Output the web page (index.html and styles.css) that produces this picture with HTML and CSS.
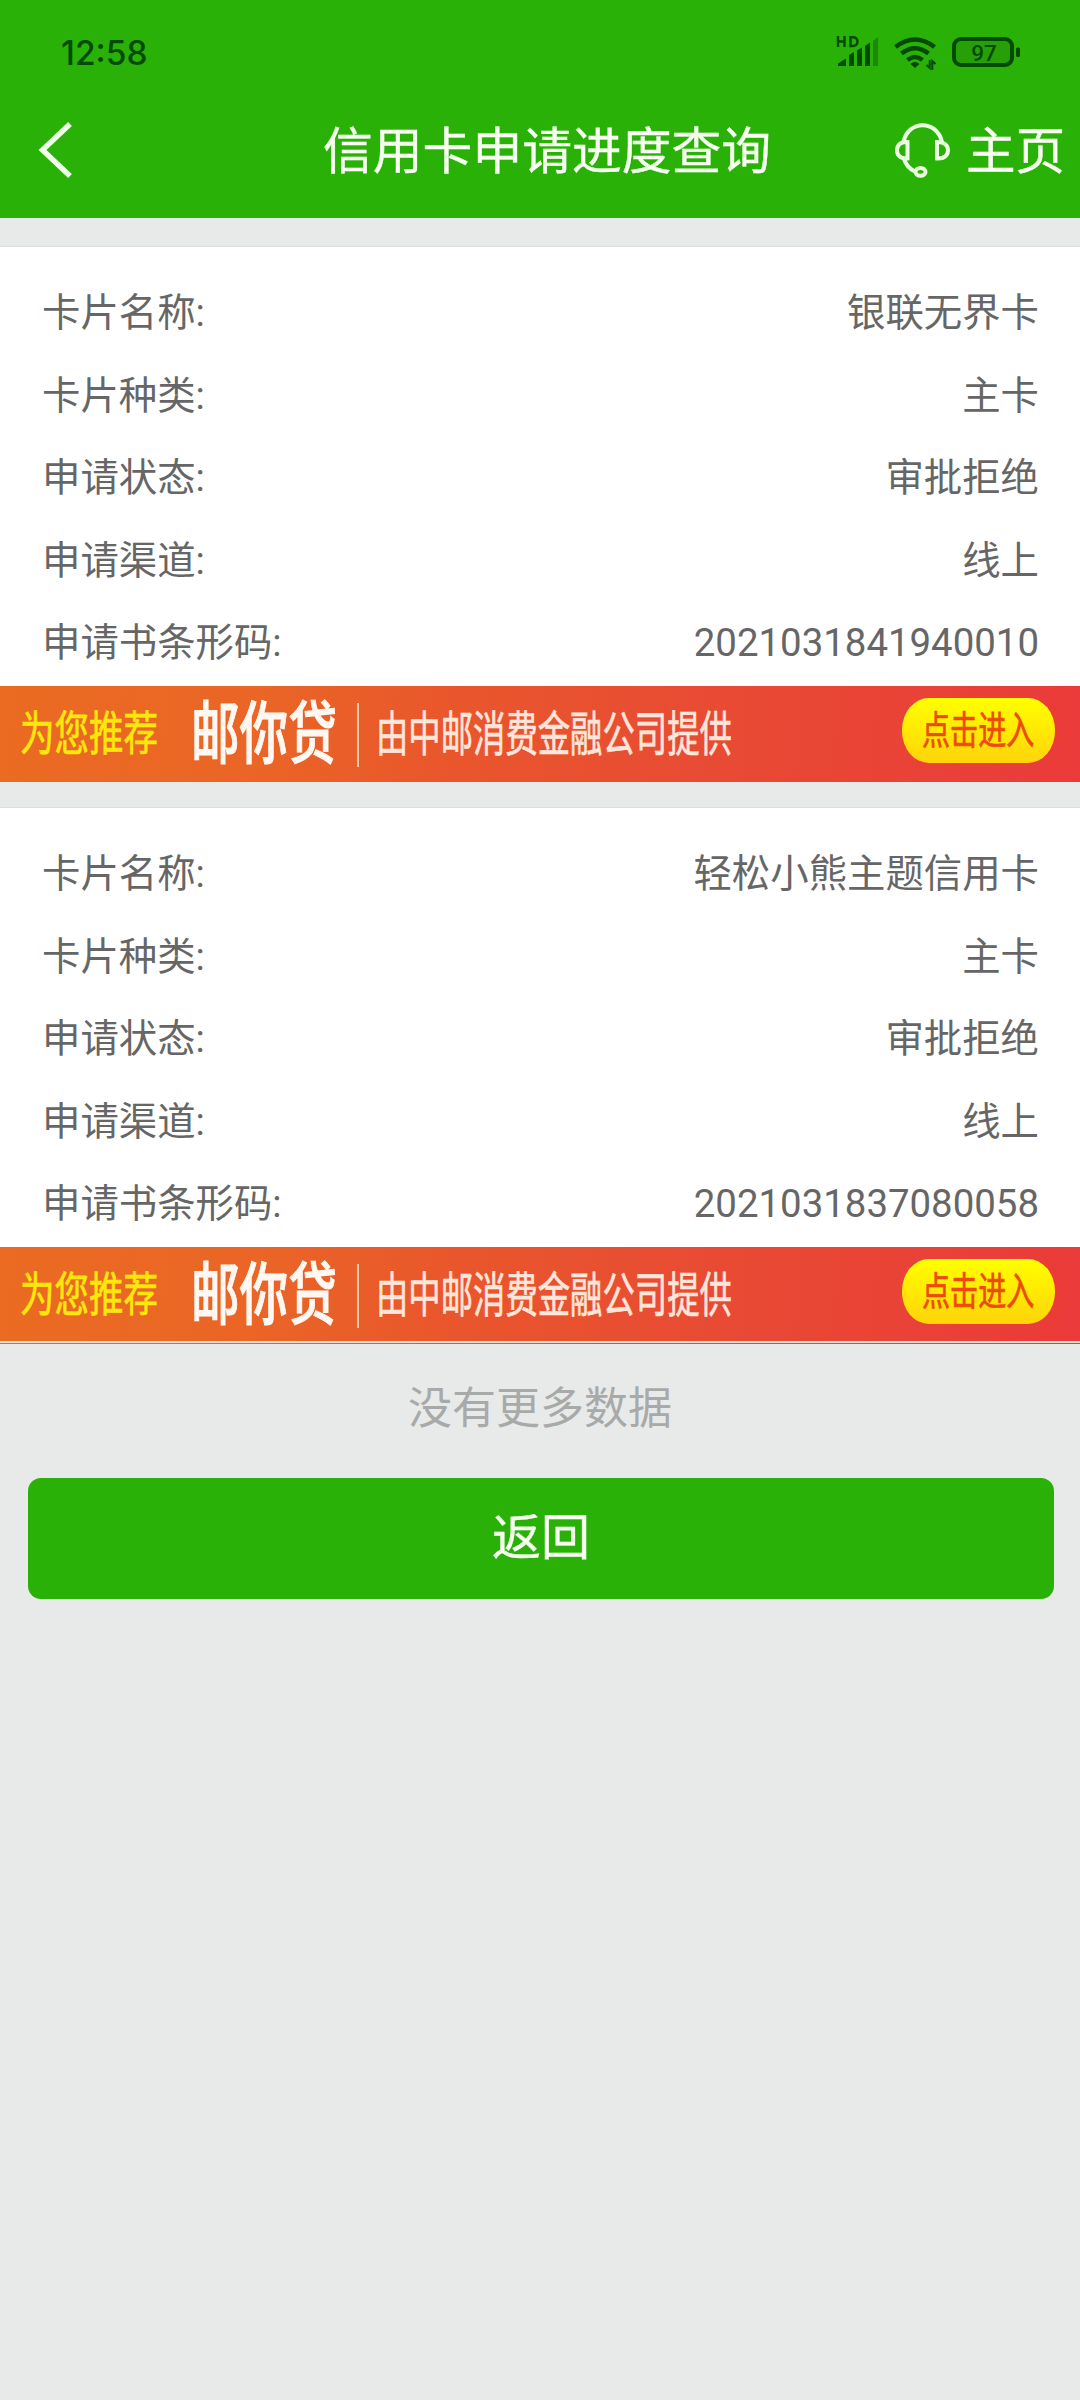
FILE: index.html
```html
<!DOCTYPE html>
<html lang="zh-CN">
<head>
<meta charset="utf-8">
<title>信用卡申请进度查询</title>
<link rel="stylesheet" href="styles.css">
</head>
<body>
<header class="header">
  <div class="status">
    <span class="clock">12:58</span>
    <svg class="status-icons" width="190" height="42" viewBox="834 32 190 42">
      <g fill="none" stroke="#044a04" stroke-width="2.400">
        <path d="M838 36v11M844.500 36v11M838 41.500h7M850.500 37.200h2q5 0 5 4.400t-5 4.400h-2z"/>
      </g>
      <path fill="#044a04" d="M838 66v-2.500l8-5v7.500zM849 66v-11l5-3v14zM857 66v-15.500l5-3v18.500zM865 66v-20l5-3.500v23.500z"/>
      <path fill="#1b8a0b" d="M873 66v-25l5-4v29z"/>
      <g fill="none" stroke="#044a04" stroke-width="4.600" stroke-linecap="butt">
        <path d="M895.500 47q19.500-15 39 0M901.500 53.500q13.500-10.500 27 0M907.500 60q7.500-6 15 0"/>
      </g>
      <path fill="#044a04" d="M910.500 64q4.500-4 9 0l-4.500 4z"/>
      <path fill="none" stroke="#044a04" stroke-width="2" d="M926.500 65l3.200 3v-8M935.500 64l-3.200-3v9"/>
      <rect x="954" y="39" width="58" height="26" rx="7" fill="#279f07" stroke="#044a04" stroke-width="4"/>
      <rect x="1016" y="47.500" width="4" height="9.500" rx="1.500" fill="#044a04"/>
      <text class="battery" x="984" y="60.500" text-anchor="middle">97</text>
    </svg>
  </div>
  <div class="nav">
    <svg class="back" width="40" height="64" viewBox="36 118 40 64"><path d="M70 124L42.500 150 70 176" fill="none" stroke="#f0ffe8" stroke-width="5.400"/></svg>
    <h1 class="title">信用卡申请进度查询</h1>
    <svg class="headset" width="60" height="60" viewBox="892 118 60 60">
      <g fill="none" stroke="#eaffdf" stroke-width="4">
        <path d="M903.500 140C908 117.500 937 117.500 942 140"/>
        <path d="M907.500 140v16.500C900 157 897 153 897 148.300S900 139.500 907.500 140zM937 140v16.500C944.500 157 948 153 948 148.300S944.500 139.500 937 140z"/>
        <path d="M904 157Q907 166 915 169.500"/>
        <ellipse cx="920.500" cy="169.800" rx="5" ry="3.900"/>
      </g>
    </svg>
    <span class="home">主页</span>
  </div>
</header>
<main>
  <section class="card">
    <dl class="rows">
      <div class="row"><dt>卡片名称:</dt><dd>银联无界卡</dd></div>
      <div class="row"><dt>卡片种类:</dt><dd>主卡</dd></div>
      <div class="row"><dt>申请状态:</dt><dd>审批拒绝</dd></div>
      <div class="row"><dt>申请渠道:</dt><dd>线上</dd></div>
      <div class="row"><dt>申请书条形码:</dt><dd>2021031841940010</dd></div>
    </dl>
    <div class="banner">
      <div class="slot recommend"><span>为您推荐</span></div>
      <div class="slot brand"><span>邮你贷</span></div>
      <div class="divider"></div>
      <div class="slot provider"><span>由中邮消费金融公司提供</span></div>
      <div class="enter"><span>点击进入</span></div>
    </div>
  </section>
  <section class="card">
    <dl class="rows">
      <div class="row"><dt>卡片名称:</dt><dd>轻松小熊主题信用卡</dd></div>
      <div class="row"><dt>卡片种类:</dt><dd>主卡</dd></div>
      <div class="row"><dt>申请状态:</dt><dd>审批拒绝</dd></div>
      <div class="row"><dt>申请渠道:</dt><dd>线上</dd></div>
      <div class="row"><dt>申请书条形码:</dt><dd>2021031837080058</dd></div>
    </dl>
    <div class="banner banner-last">
      <div class="slot recommend"><span>为您推荐</span></div>
      <div class="slot brand"><span>邮你贷</span></div>
      <div class="divider"></div>
      <div class="slot provider"><span>由中邮消费金融公司提供</span></div>
      <div class="enter"><span>点击进入</span></div>
    </div>
  </section>
  <p class="empty">没有更多数据</p>
  <button class="return">返回</button>
</main>
</body>
</html>
```
FILE: styles.css
```css
* { box-sizing: border-box; }
body {
  margin: 0;
  min-height: 2400px;
  background: #e8eae9;
  font-family: Roboto, "Noto Sans CJK SC", sans-serif;
}
.header { height: 218px; background: #2ab108; }
.status {
  display: flex;
  align-items: center;
  justify-content: space-between;
  height: 106px;
  padding: 0 56px 0 61px;
}
.clock {
  font: 500 33.5px/40px Inter, sans-serif;
  color: #044a04;
}
.battery { font: 500 22.5px Roboto, sans-serif; fill: #044a04; }
.nav {
  display: flex;
  align-items: center;
  height: 88px;
  padding-left: 36px;
  color: #f6fff0;
}
.title {
  margin: 0 0 0 247px;
  width: 449px;
  font-size: 49.8px;
  line-height: 88px;
  padding-top: 3px;
  font-weight: 400;
  white-space: nowrap;
}
.title, .home, .return { -webkit-text-stroke: .4px currentColor; }
.headset { margin-left: 120px; }
.home { padding-top: 3px; margin-left: 14px; font-size: 49.6px; line-height: 88px; white-space: nowrap; }
.card {
  margin-top: 28px;
  border-top: 1px solid #dcdedd;
  background: #fff;
}
.card + .card { margin-top: 25px; }
.rows { margin: 0; padding: 25px 41px 2px 42px; }
.row {
  display: flex;
  justify-content: space-between;
  height: 82px;
  font-size: 38.4px;
  line-height: 82px;
  color: #666;
}
.row:nth-child(1), .row:nth-child(3) { height: 83px; }
.row dd { margin: 0; }
.banner {
  display: flex;
  align-items: flex-start;
  height: 96px;
  padding: 12px 25px 0 20px;
  background: linear-gradient(95deg, #eb6b22 0%, #ea6526 24%, #e9562c 42%, #e84a34 68%, #eb3a3a 100%);
}
.slot { height: 70px; line-height: 71px; white-space: nowrap; }
.slot span, .enter span { display: inline-block; transform-origin: left center; }
.recommend { width: 171px; font-size: 47px; color: #fbe70c; }
.recommend span { transform: scaleX(.734); }
.brand { width: 166px; font-size: 68px; line-height: 75px; font-weight: 500; color: #fff8f2; }
.brand span { transform: scaleX(.715); -webkit-text-stroke: 1px currentColor; }
.divider { width: 2px; height: 64px; margin-top: 5px; background: #f8c5a8; }
.provider { width: 543px; padding-left: 17px; font-size: 48px; line-height: 73px; color: #ffe5da; }
.provider span { transform: scaleX(.674); }
.recommend span, .provider span, .enter span { -webkit-text-stroke: .7px currentColor; }
.enter {
  width: 153px;
  height: 65px;
  padding-left: 20px;
  border-radius: 27px / 32px;
  background: linear-gradient(#ffff00, #ffd40a);
  font-size: 39px;
  line-height: 67px;
  color: #ee4a08;
  white-space: nowrap;
}
.enter span { transform: scaleX(.72); }
.banner-last {
  position: relative;
  height: 97px;
}
.banner-last::after {
  content: "";
  position: absolute;
  left: 0;
  right: 0;
  bottom: 1px;
  height: 2px;
  background: #f6dccf;
}
.empty {
  margin: 0;
  padding-top: 30px;
  height: 134px;
  font-size: 44px;
  line-height: 70px;
  text-align: center;
  color: #a8a9a9;
}
.return {
  display: block;
  width: 1026px;
  height: 121px;
  margin: 0 0 0 28px;
  padding: 0;
  border: 0;
  border-radius: 13px;
  background: #2ab108;
  font: 400 49px/121px Roboto, "Noto Sans CJK SC", sans-serif;
  color: #f6fff0;
}
```
